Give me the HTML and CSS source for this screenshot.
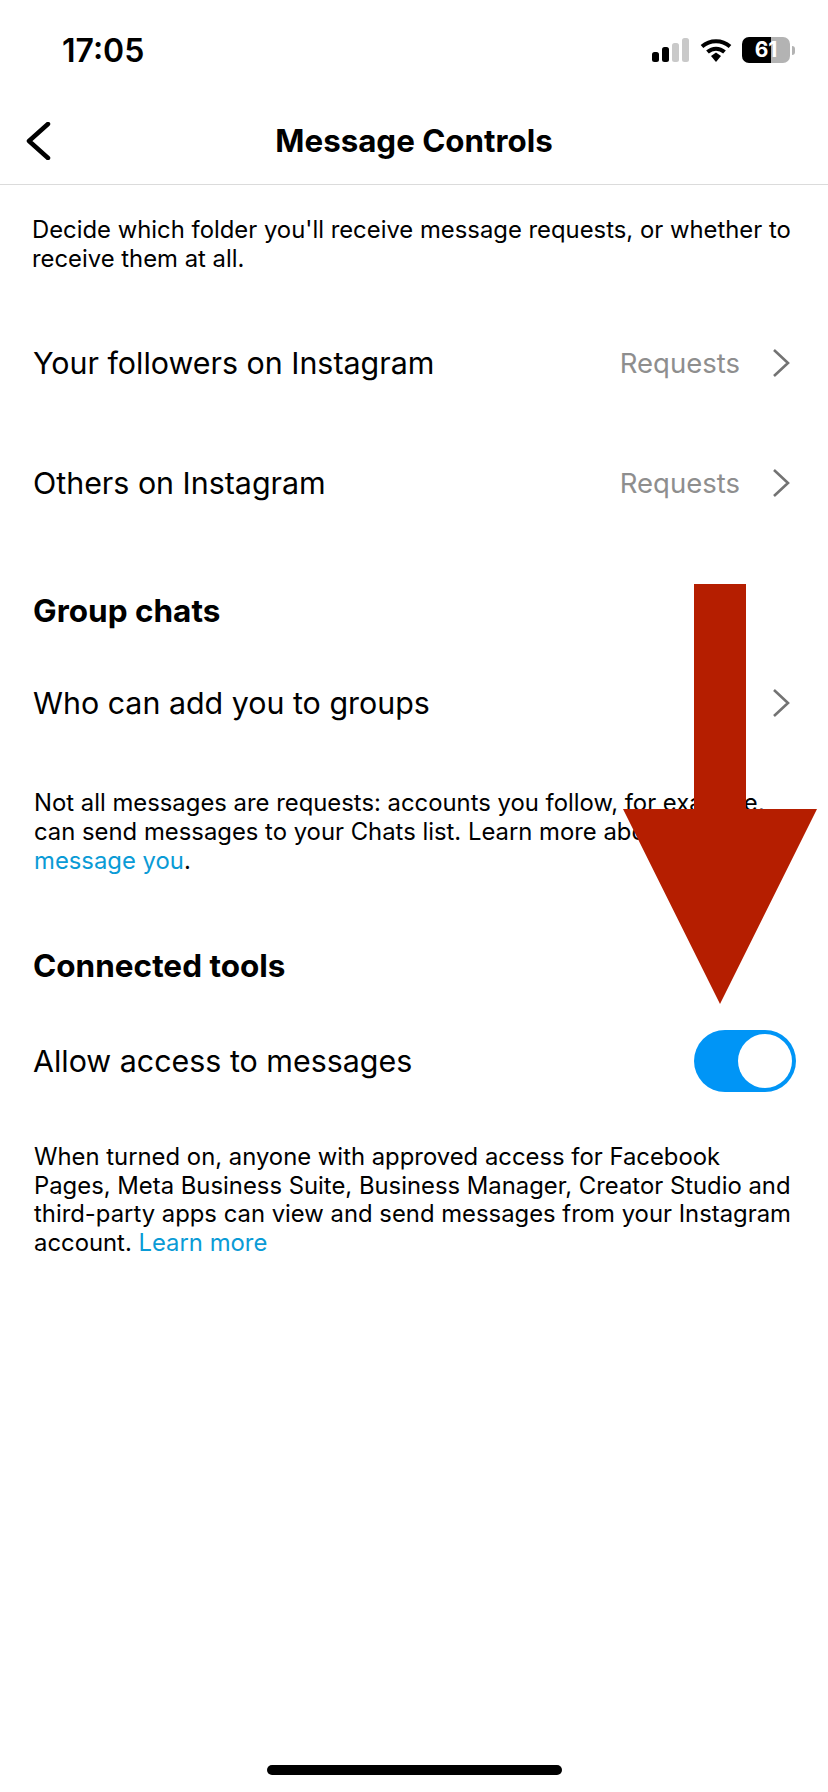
FILE: index.html
```html
<!DOCTYPE html>
<html lang="en">
<head>
  <meta charset="UTF-8">
  <meta name="viewport" content="width=device-width, initial-scale=1.0">
  <title>Message Controls</title>
  <link rel="stylesheet" href="styles.css">
</head>
<body>
  <div id="phone">
    <div class="status-bar">
      <span class="time">17:05</span>
      <div class="status-icons">
        <svg class="signal" width="37" height="24" viewBox="0 0 37 24">
          <rect x="0" y="14" width="7" height="10" rx="2.5" fill="#000"/>
          <rect x="10" y="9" width="7" height="15" rx="2.5" fill="#000"/>
          <rect x="20" y="5" width="7" height="19" rx="2.5" fill="#c9c9c9"/>
          <rect x="30" y="0" width="7" height="24" rx="2.5" fill="#c9c9c9"/>
        </svg>
        <svg class="wifi" width="32" height="24" viewBox="0 0 32 24">
          <path d="M2 8.5 C10 1.5 22 1.5 30 8.5" fill="none" stroke="#000" stroke-width="4"/>
          <path d="M7.5 14 C12.5 9.5 19.5 9.5 24.5 14" fill="none" stroke="#000" stroke-width="4"/>
          <path d="M11 18 L16 14.6 L21 18 L16 24 Z" fill="#000"/>
        </svg>
        <div class="battery">
          <div class="battery-body"><span class="battery-level">61</span></div>
          <div class="battery-nub"></div>
        </div>
      </div>
    </div>

    <div class="nav">
      <svg class="back" width="26" height="38" viewBox="0 0 26 38">
        <path d="M23 2 L4 19 L23 36" fill="none" stroke="#000" stroke-width="4.5" stroke-linecap="round" stroke-linejoin="round"/>
      </svg>
      <h1>Message Controls</h1>
    </div>

    <p class="intro">Decide which folder you'll receive message requests, or whether to receive them at all.</p>

    <div class="row first">
      <span class="label">Your followers on Instagram</span>
      <span class="value">Requests</span>
      <svg class="chevron" width="18" height="30" viewBox="0 0 18 30"><path d="M2 2 L16 15 L2 28" fill="none" stroke="#737373" stroke-width="2.6"/></svg>
    </div>
    <div class="row">
      <span class="label">Others on Instagram</span>
      <span class="value">Requests</span>
      <svg class="chevron" width="18" height="30" viewBox="0 0 18 30"><path d="M2 2 L16 15 L2 28" fill="none" stroke="#737373" stroke-width="2.6"/></svg>
    </div>

    <h2 class="group-title">Group chats</h2>
    <div class="row">
      <span class="label">Who can add you to groups</span>
      <svg class="chevron" width="18" height="30" viewBox="0 0 18 30"><path d="M2 2 L16 15 L2 28" fill="none" stroke="#737373" stroke-width="2.6"/></svg>
    </div>
    <p class="note">Not all messages are requests: accounts you follow, for example, can send messages to your Chats list. Learn more about who can <a href="#">message you</a>.</p>

    <h2 class="tools-title">Connected tools</h2>
    <div class="row tools-row">
      <span class="label">Allow access to messages</span>
      <div class="toggle"><div class="knob"></div></div>
    </div>
    <p class="note tools-note">When turned on, anyone with approved access for Facebook Pages, Meta Business Suite, Business Manager, Creator Studio and third-party apps can view and send messages from your Instagram account. <a href="#">Learn more</a></p>

    <div class="home-bar"></div>

    <svg class="arrow" width="194" height="420" viewBox="0 0 194 420">
      <path d="M71 0 H123 V225 H194 L97 420 L0 225 H71 Z" fill="#b51e00"/>
    </svg>
  </div>
</body>
</html>
```
FILE: styles.css
```css
html, body {
  margin: 0;
  padding: 0;
  background: #fff;
}
body {
  font-family: Inter, Roboto, 'Liberation Sans', sans-serif;
  color: #000;
}
#phone {
  position: relative;
  width: 828px;
  height: 1792px;
  overflow: hidden;
  background: #fff;
}
.status-bar {
  display: flex;
  justify-content: space-between;
  align-items: center;
  height: 100px;
  padding: 0 33px 0 62px;
  box-sizing: border-box;
}
.time {
  font-size: 32px;
  font-weight: 600;
}
.status-icons {
  display: flex;
  align-items: center;
  gap: 10px;
}
.signal {
  margin-right: 1px;
}
.battery {
  display: flex;
  align-items: center;
  gap: 2px;
}
.battery-body {
  width: 48px;
  height: 26px;
  border-radius: 7px;
  background: linear-gradient(to right, #000 60%, #b3b3b3 60%);
  color: #fff;
  font-size: 21px;
  font-weight: 700;
  line-height: 26px;
  text-align: center;
}
.battery-nub {
  width: 3px;
  height: 9px;
  border-radius: 0 3px 3px 0;
  background: #b3b3b3;
}
.nav {
  position: relative;
  display: flex;
  align-items: center;
  justify-content: center;
  height: 82px;
  padding-bottom: 2px;
  border-bottom: 1px solid #dbdbdb;
  box-sizing: content-box;
}
.back {
  position: absolute;
  left: 25px;
  top: 22px;
}
h1 {
  margin: 0;
  font-size: 31.3px;
  font-weight: 700;
}
.intro {
  margin: 31px 32px 0;
  font-size: 23.85px;
  line-height: 28.5px;
}
.row {
  display: flex;
  align-items: center;
  height: 60px;
  padding: 0 38px 0 33px;
  font-size: 30.4px;
}
.row.first {
  margin-top: 60px;
}
.row + .row {
  margin-top: 60px;
}
.label {
  flex: 1;
}
.value {
  margin-right: 32px;
  font-size: 27.5px;
  color: #8e8e8e;
}
.chevron {
  display: block;
  width: 18px;
  height: 30px;
}
h2 {
  margin: 0 0 0 33px;
  font-size: 31.5px;
  font-weight: 700;
  line-height: 40px;
}
.group-title {
  margin-top: 78px;
}
.group-title + .row {
  margin-top: 42px;
}
.note {
  margin: 55px 32px 0 34px;
  font-size: 23.85px;
  line-height: 29px;
}
.note a {
  color: #0a9bd6;
  text-decoration: none;
}
.tools-title {
  margin-top: 71px;
}
.tools-row {
  margin-top: 45px;
  padding-right: 32px;
}
.tools-note {
  margin-top: 52px;
  line-height: 28.6px;
}
.toggle {
  display: flex;
  justify-content: flex-end;
  align-items: center;
  width: 102px;
  height: 62px;
  padding: 0 4px;
  box-sizing: border-box;
  border-radius: 31px;
  background: #0095f6;
}
.knob {
  width: 54px;
  height: 54px;
  border-radius: 50%;
  background: #fff;
}
.home-bar {
  position: absolute;
  left: 267px;
  bottom: 17px;
  width: 295px;
  height: 10px;
  border-radius: 5px;
  background: #000;
}
.arrow {
  position: absolute;
  left: 623px;
  top: 584px;
}
```
